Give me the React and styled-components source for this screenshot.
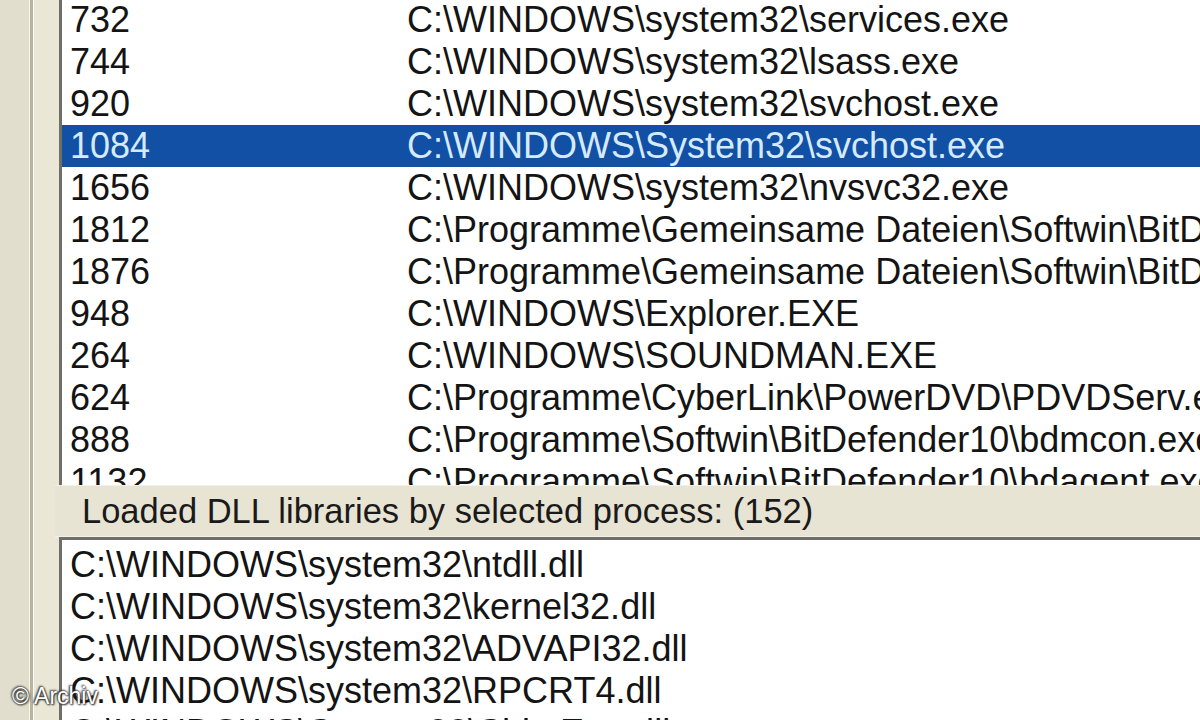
import React from 'react'
import styled, { createGlobalStyle } from 'styled-components'

const GlobalStyle = createGlobalStyle`
  html, body {
    margin: 0;
    padding: 0;
    background: #ece9d8;
  }
  body {
    font-family: "Liberation Sans", Arial, sans-serif;
  }
`

const processes = [
  ['732', 'C:\\WINDOWS\\system32\\services.exe'],
  ['744', 'C:\\WINDOWS\\system32\\lsass.exe'],
  ['920', 'C:\\WINDOWS\\system32\\svchost.exe'],
  ['1084', 'C:\\WINDOWS\\System32\\svchost.exe'],
  ['1656', 'C:\\WINDOWS\\system32\\nvsvc32.exe'],
  ['1812', 'C:\\Programme\\Gemeinsame Dateien\\Softwin\\BitDefender Communicator\\xcommsvr.exe'],
  ['1876', 'C:\\Programme\\Gemeinsame Dateien\\Softwin\\BitDefender Scan Server\\bdss.exe'],
  ['948', 'C:\\WINDOWS\\Explorer.EXE'],
  ['264', 'C:\\WINDOWS\\SOUNDMAN.EXE'],
  ['624', 'C:\\Programme\\CyberLink\\PowerDVD\\PDVDServ.exe'],
  ['888', 'C:\\Programme\\Softwin\\BitDefender10\\bdmcon.exe'],
  ['1132', 'C:\\Programme\\Softwin\\BitDefender10\\bdagent.exe'],
]

const dlls = [
  'C:\\WINDOWS\\system32\\ntdll.dll',
  'C:\\WINDOWS\\system32\\kernel32.dll',
  'C:\\WINDOWS\\system32\\ADVAPI32.dll',
  'C:\\WINDOWS\\system32\\RPCRT4.dll',
  'C:\\WINDOWS\\System32\\ShimEng.dll',
]

const Window = styled.div`
  position: relative;
  width: 1200px;
  height: 720px;
  overflow: hidden;
  display: flex;
  background: #ece9d8;
`

const OuterStrip = styled.div`
  width: 29px;
  flex: none;
  background: #e2dece;
  border-right: 1px solid #f6f4ec;
`

const Splitter = styled.div`
  width: 3px;
  flex: none;
  background: #b9b4a0;
  border-right: 1px solid #fbfaf4;
`

const Gutter = styled.div`
  width: 25px;
  flex: none;
  background: #ebe7d6;
`

const Main = styled.div`
  flex: 1;
  min-width: 0;
  display: flex;
  flex-direction: column;
`

const ListBox = styled.div`
  background: #fff;
  border-left: 3px solid #6f6e68;
  border-top: ${p => (p.$top ? '3px solid #6f6e68' : 'none')};
  padding-top: ${p => (p.$top ? '4px' : '0')};
  margin-top: ${p => (p.$top ? '0' : '-1px')};
  height: ${p => p.$height}px;
  overflow: hidden;
  flex: none;
`

const Row = styled.div`
  display: flex;
  height: 42px;
  line-height: 42px;
  padding-left: 8px;
  font-size: 36px;
  white-space: nowrap;
  color: ${p => (p.$selected ? '#d6eaff' : '#141414')};
  background: ${p => (p.$selected ? '#1150a4' : 'transparent')};
`

const PidCell = styled.span`
  width: 337px;
  flex: none;
`

const PathCell = styled.span`
  flex: none;
`

const LabelBar = styled.div`
  height: 50px;
  flex: none;
  display: flex;
  align-items: center;
  padding-left: 27px;
  margin-left: -4px;
  background: #e8e4d3;
  border-top: 1px solid #f3f1e6;
  border-bottom: 1px solid #f4f2e8;
  font-size: 34.5px;
  color: #1a1a1a;
  white-space: nowrap;
`

const Watermark = styled.div`
  position: absolute;
  left: 12px;
  bottom: 10px;
  font-size: 23px;
  color: #fff;
  text-shadow: 0 0 2px #222, 1px 1px 2px #222, -1px -1px 2px #444;
`

export default function App() {
  return (
    <>
      <GlobalStyle />
      <Window>
        <OuterStrip />
        <Splitter />
        <Gutter />
        <Main>
          <ListBox $height={486}>
            {processes.map(([pid, path]) => (
              <Row key={pid} $selected={pid === '1084'}>
                <PidCell>{pid}</PidCell>
                <PathCell>{path}</PathCell>
              </Row>
            ))}
          </ListBox>
          <LabelBar>Loaded DLL libraries by selected process: (152)</LabelBar>
          <ListBox $top $height={300}>
            {dlls.map(d => (
              <Row key={d}>
                <PathCell>{d}</PathCell>
              </Row>
            ))}
          </ListBox>
        </Main>
        <Watermark>© Archiv</Watermark>
      </Window>
    </>
  )
}
